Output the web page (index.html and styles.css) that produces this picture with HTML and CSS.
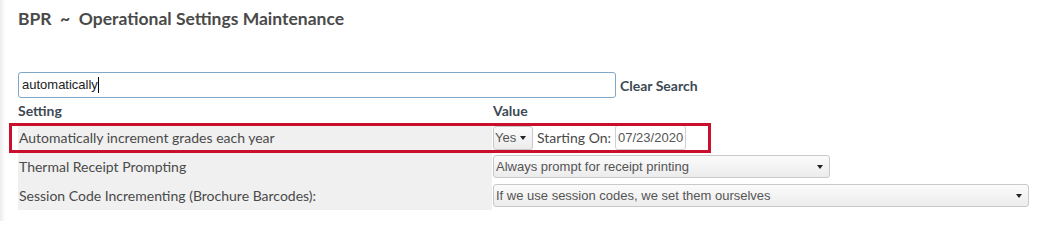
FILE: index.html
```html
<!DOCTYPE html>
<html>
<head>
<meta charset="utf-8">
<link rel="stylesheet" href="styles.css">
</head>
<body>
<div class="page">
  <h1 class="title">BPR&nbsp; ~&nbsp; Operational Settings Maintenance</h1>
  <div class="search-row">
    <div class="search-input">automatically<span class="caret"></span></div>
    <span class="clear">Clear Search</span>
  </div>
  <div class="grid">
    <div class="head head-setting">Setting</div>
    <div class="head head-value">Value</div>

    <div class="cell setting">Automatically increment grades each year</div>
    <div class="cell value">
      <div class="select sel-yes"><span class="sel-text">Yes</span><span class="arrow"></span></div>
      <span class="starting">Starting On:</span>
      <div class="date">07/23/2020</div>
    </div>

    <div class="cell setting">Thermal Receipt Prompting</div>
    <div class="cell value">
      <div class="select sel-thermal"><span class="sel-text">Always prompt for receipt printing</span><span class="arrow"></span></div>
    </div>

    <div class="cell setting">Session Code Incrementing (Brochure Barcodes):</div>
    <div class="cell value">
      <div class="select sel-session"><span class="sel-text">If we use session codes, we set them ourselves</span><span class="arrow"></span></div>
    </div>
    <div class="highlight"></div>
  </div>
</div>
</body>
</html>
```
FILE: styles.css
```css
html, body {
  margin: 0;
  padding: 0;
  background: #fff;
}
body {
  width: 1049px;
  height: 221px;
  overflow: hidden;
  background: linear-gradient(to right, #ececec 0px, #f7f7f7 3px, #ffffff 6px);
}
.page {
  padding: 8px 0 0 18px;
  font-family: Lato, "Open Sans", sans-serif;
  color: #444;
}
.title {
  margin: 0;
  font-size: 17.5px;
  font-weight: 700;
  line-height: 22px;
  color: #4a4a4a;
}
.search-row {
  margin-top: 42px;
  display: flex;
  align-items: center;
  height: 26px;
}
.search-input {
  box-sizing: border-box;
  width: 598px;
  height: 26px;
  border: 1px solid #7fa7c9;
  border-radius: 3px;
  font-family: "Liberation Sans", Arial, sans-serif;
  font-size: 13px;
  line-height: 24px;
  padding-left: 3px;
  color: #222;
  display: flex;
  align-items: center;
}
.caret {
  display: inline-block;
  width: 1px;
  height: 16px;
  background: #000;
}
.clear {
  margin-left: 4px;
  font-weight: 700;
  font-size: 14px;
  color: #3d4a55;
}
.grid {
  position: relative;
  display: grid;
  grid-template-columns: 474px 548px;
  grid-template-rows: 22px;
  grid-auto-rows: 29px;
  margin-top: 3px;
}
.grid .head {
  height: 20px;
  font-weight: 700;
  font-size: 14px;
  line-height: 20px;
  color: #3d4a55;
}
.head-value { padding-left: 1px; }
.grid > .head { grid-row: 1; }
.cell {
  display: flex;
  align-items: center;
  font-size: 14px;
}
.setting {
  background: #f0f0f0;
  padding-left: 1px;
  color: #4a4a4a;
}
.value {
  padding-left: 1px;
}
.select {
  box-sizing: border-box;
  height: 23px;
  border: 1px solid #c9c9c9;
  border-radius: 3px;
  background: linear-gradient(#fbfbfb, #ececec);
  display: flex;
  align-items: center;
  padding-left: 2px;
  font-family: "Liberation Sans", Arial, sans-serif;
  font-size: 13px;
  color: #555;
  overflow: hidden;
  white-space: nowrap;
}
.sel-text { flex: 1; overflow: hidden; }
.arrow {
  width: 0;
  height: 0;
  border-left: 3.5px solid transparent;
  border-right: 3.5px solid transparent;
  border-top: 4px solid #222;
  margin: 0 6px 0 4px;
  flex: none;
}
.sel-yes {
  width: 40px;
  height: 24px;
  font-size: 13px;
  padding-left: 1px;
}
.sel-yes .sel-text { width: 23px; flex: none; overflow: visible; }
.sel-yes .arrow { margin: 0 0 0 2px; }
.starting {
  margin-left: 4px;
  color: #4a4a4a;
}
.date {
  box-sizing: border-box;
  margin-left: 4px;
  width: 71px;
  height: 25px;
  border: 1px solid #d0d0d0;
  border-radius: 3px;
  font-family: "Liberation Sans", Arial, sans-serif;
  font-size: 13px;
  line-height: 23px;
  padding-left: 2px;
  color: #555;
  background: #fff;
}
.sel-thermal { width: 337px; }
.sel-session { width: 536px; }
.highlight {
  position: absolute;
  left: -9px;
  top: 22px;
  width: 702px;
  height: 30px;
  box-sizing: border-box;
  border: 3px solid #c8102e;
  pointer-events: none;
}
```
